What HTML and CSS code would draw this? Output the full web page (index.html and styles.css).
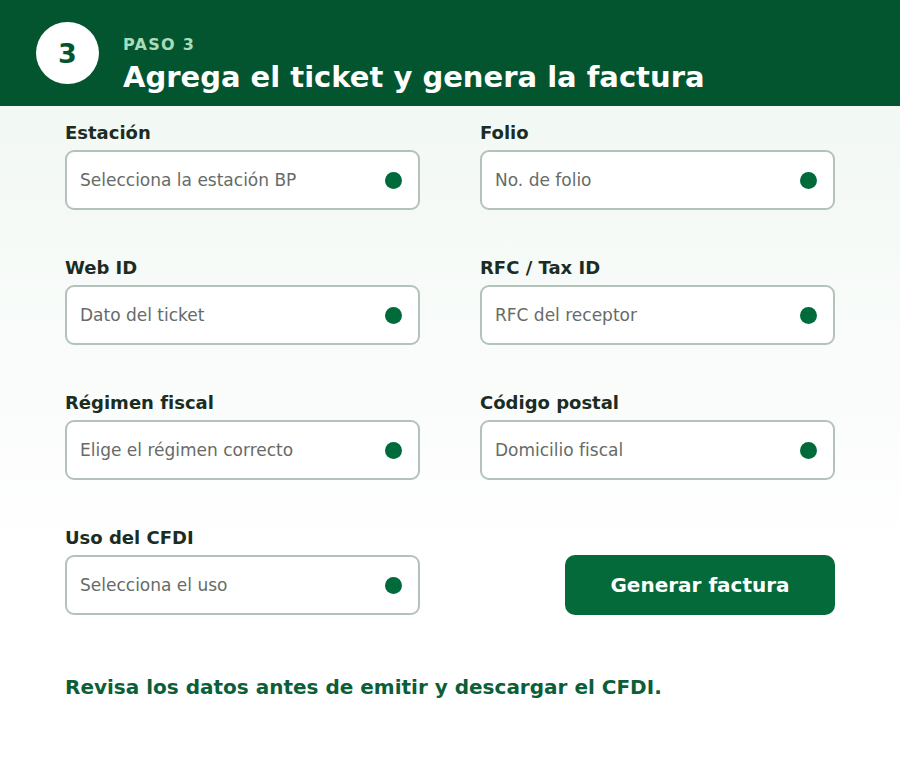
FILE: index.html
```html
<!DOCTYPE html>
<html lang="es">
<head>
<meta charset="utf-8">
<title>Paso 3</title>
<link rel="stylesheet" href="styles.css">
</head>
<body>
<header class="hero">
  <div class="step-badge">3</div>
  <div class="hero-text">
    <div class="eyebrow">PASO 3</div>
    <h1 class="title">Agrega el ticket y genera la factura</h1>
  </div>
</header>
<main class="content">
  <form class="form-grid">
    <div class="field">
      <label class="label">Estación</label>
      <div class="input"><span class="ph">Selecciona la estación BP</span><span class="dot"></span></div>
    </div>
    <div class="field">
      <label class="label">Folio</label>
      <div class="input"><span class="ph">No. de folio</span><span class="dot"></span></div>
    </div>
    <div class="field">
      <label class="label">Web ID</label>
      <div class="input"><span class="ph">Dato del ticket</span><span class="dot"></span></div>
    </div>
    <div class="field">
      <label class="label">RFC / Tax ID</label>
      <div class="input"><span class="ph">RFC del receptor</span><span class="dot"></span></div>
    </div>
    <div class="field">
      <label class="label">Régimen fiscal</label>
      <div class="input"><span class="ph">Elige el régimen correcto</span><span class="dot"></span></div>
    </div>
    <div class="field">
      <label class="label">Código postal</label>
      <div class="input"><span class="ph">Domicilio fiscal</span><span class="dot"></span></div>
    </div>
    <div class="field">
      <label class="label">Uso del CFDI</label>
      <div class="input"><span class="ph">Selecciona el uso</span><span class="dot"></span></div>
    </div>
    <div class="action">
      <button type="button" class="btn">Generar factura</button>
    </div>
  </form>
  <p class="note">Revisa los datos antes de emitir y descargar el CFDI.</p>
</main>
</body>
</html>
```

FILE: styles.css
```css
* { box-sizing: border-box; }
html, body { margin: 0; padding: 0; }
body {
  width: 900px;
  height: 760px;
  font-family: "DejaVu Sans", sans-serif;
  background: #ffffff;
  overflow: hidden;
}
.hero {
  height: 106px;
  background: #03552f;
  display: flex;
  align-items: flex-start;
  padding: 22px 0 0 36px;
}
.step-badge {
  width: 63px;
  height: 62px;
  border-radius: 50%;
  background: #ffffff;
  color: #03552f;
  font-weight: bold;
  font-size: 27px;
  display: flex;
  align-items: center;
  justify-content: center;
  flex: none;
}
.hero-text {
  margin-left: 24px;
  padding-top: 13px;
}
.eyebrow {
  font-size: 16px;
  font-weight: bold;
  letter-spacing: 1.3px;
  color: #a9dcbb;
  line-height: 20px;
}
.title {
  margin: 5px 0 0;
  font-size: 29px;
  font-weight: bold;
  color: #ffffff;
  line-height: 34px;
}
.content {
  height: 654px;
  background: linear-gradient(to bottom, #f2f8f4 0%, #ffffff 70%);
  padding: 17px 65px 0;
}
.form-grid {
  display: grid;
  grid-template-columns: 355px 355px;
  column-gap: 60px;
  row-gap: 48px;
  margin: 0;
}
.field {
  display: flex;
  flex-direction: column;
  gap: 7px;
}
.label {
  font-size: 18px;
  font-weight: bold;
  color: #1b2d23;
  line-height: 20px;
}
.input {
  height: 60px;
  border: 2px solid #b3c3bb;
  border-radius: 9px;
  background: #ffffff;
  display: flex;
  align-items: center;
  justify-content: space-between;
  padding: 0 16px 0 13px;
}
.ph {
  font-size: 17px;
  color: #666b68;
}
.dot {
  width: 17px;
  height: 17px;
  border-radius: 50%;
  background: #006b3a;
  flex: none;
}
.action {
  display: flex;
  align-items: flex-end;
  justify-content: flex-end;
}
.btn {
  width: 270px;
  height: 60px;
  border: none;
  border-radius: 10px;
  background: #046a3a;
  color: #ffffff;
  font-family: "DejaVu Sans", sans-serif;
  font-size: 20px;
  font-weight: bold;
  cursor: pointer;
}
.note {
  margin: 60px 0 0;
  font-size: 20px;
  font-weight: bold;
  color: #0b5e36;
  line-height: 24px;
}
```
